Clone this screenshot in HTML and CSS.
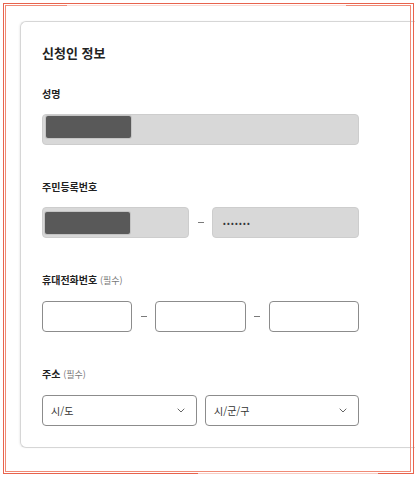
FILE: index.html
```
<!DOCTYPE html>
<html lang="ko">
<head>
<meta charset="utf-8">
<title>신청인 정보</title>
<link rel="stylesheet" href="styles.css">
</head>
<body>
<div class="card">
  <h2 class="title">신청인 정보</h2>

  <div class="field">
    <div class="label">성명</div>
    <div class="box filled"><span class="mask"></span></div>
  </div>

  <div class="field">
    <div class="label">주민등록번호</div>
    <div class="row two-dash">
      <div class="box filled"><span class="mask mask-sm"></span></div>
      <span class="dash"></span>
      <div class="box filled"><span class="dots">•••••••</span></div>
    </div>
  </div>

  <div class="field">
    <div class="label">휴대전화번호 <span class="req">(필수)</span></div>
    <div class="row three-dash">
      <div class="box empty"></div>
      <span class="dash"></span>
      <div class="box empty"></div>
      <span class="dash"></span>
      <div class="box empty"></div>
    </div>
  </div>

  <div class="field">
    <div class="label">주소 <span class="req">(필수)</span></div>
    <div class="row selects">
      <div class="box select"><span>시/도</span>
        <svg class="chev" width="8" height="5" viewBox="0 0 8 5"><path d="M0.7 0.7L4 4L7.3 0.7" fill="none" stroke="#666" stroke-width="1"/></svg>
      </div>
      <div class="box select"><span>시/군/구</span>
        <svg class="chev" width="8" height="5" viewBox="0 0 8 5"><path d="M0.7 0.7L4 4L7.3 0.7" fill="none" stroke="#666" stroke-width="1"/></svg>
      </div>
    </div>
  </div>
</div>

<div class="frame frame-outer"></div>
<div class="frame frame-inner"></div>
</body>
</html>
```

FILE: styles.css
```
html, body {
  margin: 0;
  padding: 0;
  overflow: hidden;
  background: #ffffff;
}

body {
  width: 415px;
  height: 479px;
  position: relative;
  font-family: "Noto Sans CJK KR", "Noto Sans", sans-serif;
  color: #222;
}

.card {
  margin: 21px 0 0 20px;
  width: 395px;
  box-sizing: border-box;
  border: 1px solid #d6d6d6;
  border-right: 0;
  border-radius: 6px 0 0 6px;
  box-shadow: -1px 0 2px rgba(0, 0, 0, 0.06);
  padding: 21px 0 21px 21px;
}

.card > * {
  width: 317px;
}

.title {
  margin: 0;
  font-size: 13px;
  line-height: 19px;
  font-weight: 700;
  color: #222;
}

.field {
  margin-top: 35px;
}

.title + .field {
  margin-top: 25px;
}

.label {
  font-size: 10px;
  line-height: 14px;
  font-weight: 700;
  color: #222;
  margin-bottom: 13px;
}

.req {
  font-size: 9px;
  font-weight: 400;
  color: #777;
}

.box {
  box-sizing: border-box;
  height: 31px;
  border-radius: 4px;
  display: flex;
  align-items: center;
}

.filled {
  background: #d8d8d8;
  border: 1px solid #cdcdcd;
}

.empty {
  background: #fff;
  border: 1px solid #8c8c8c;
}

.mask {
  display: block;
  width: 85px;
  height: 22px;
  margin: -5px 0 0 3px;
  background: #595959;
  border-radius: 2px;
  box-shadow: 0 0 0 1px #c4c4c4;
}

.mask-sm {
  margin: 0 0 0 2px;
}

.dots {
  font-size: 8px;
  letter-spacing: 1.3px;
  color: #333;
  margin-left: 10px;
  line-height: 1;
}

.row {
  display: grid;
  align-items: center;
}

.two-dash {
  grid-template-columns: 1fr 23px 1fr;
}

.three-dash {
  grid-template-columns: 1fr 23px 1fr 23px 1fr;
}

.dash {
  justify-self: center;
  width: 6px;
  height: 1px;
  background: #7a7a7a;
}

.selects {
  grid-template-columns: 155px 1fr;
  column-gap: 8px;
}

.select {
  background: #fff;
  border: 1px solid #8c8c8c;
  justify-content: space-between;
  padding: 0 11px 0 8px;
  font-size: 10px;
  color: #333;
}

.chev {
  display: block;
}

.frame {
  position: absolute;
  box-sizing: border-box;
  pointer-events: none;
}

.frame-outer {
  left: 3px;
  top: 3px;
  width: 411px;
  height: 471px;
  border: 1px solid #e8634d;
}

.frame-outer::after {
  content: "";
  position: absolute;
  bottom: -1px;
  left: 194px;
  width: 180px;
  height: 1px;
  background: #f9cdc4;
}

.frame-inner {
  left: 5px;
  top: 5px;
  width: 406px;
  height: 467px;
  border: 1px solid #f08a75;
}

.frame-inner::after {
  content: "";
  position: absolute;
  top: -1px;
  left: 61px;
  width: 279px;
  height: 1px;
  background: #fcdcd5;
}
```
